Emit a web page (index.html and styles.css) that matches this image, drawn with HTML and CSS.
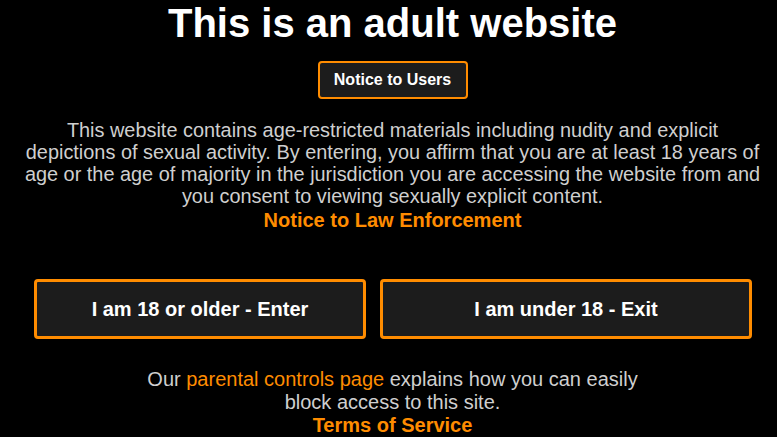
FILE: index.html
```html
<!DOCTYPE html>
<html lang="en">
<head>
<meta charset="utf-8">
<title>This is an adult website</title>
<link rel="stylesheet" href="styles.css">
</head>
<body>
<main class="gate">
  <h1 class="title">This is an adult website</h1>
  <a class="notice-btn" href="#">Notice to Users</a>
  <p class="intro">This website contains age-restricted materials including nudity and explicit depictions of sexual activity. By entering, you affirm that you are at least 18 years of age or the age of majority in the jurisdiction you are accessing the website from and you consent to viewing sexually explicit content.</p>
  <a class="law-link" href="#">Notice to Law Enforcement</a>
  <div class="choices">
    <a class="choice" href="#">I am 18 or older - Enter</a>
    <a class="choice" href="#">I am under 18 - Exit</a>
  </div>
  <p class="parental">Our <a class="inline-link" href="#">parental controls page</a> explains how you can easily block access to this site.</p>
  <a class="tos-link" href="#">Terms of Service</a>
</main>
</body>
</html>
```

FILE: styles.css
```css
html, body {
  margin: 0;
  padding: 0;
  background: #000;
}
body {
  font-family: "Liberation Sans", Arial, sans-serif;
  color: #cfcfcf;
}
.gate {
  padding-left: 8px;
  display: flex;
  flex-direction: column;
  align-items: center;
  text-align: center;
}
.title {
  margin: 0;
  font-size: 40px;
  line-height: 46px;
  font-weight: bold;
  color: #fff;
}
.notice-btn {
  margin-top: 15px;
  width: 146px;
  height: 34px;
  box-sizing: content-box;
  display: flex;
  align-items: center;
  justify-content: center;
  border: 2px solid #ff8c00;
  border-radius: 4px;
  background: #1c1c1c;
  color: #fff;
  font-size: 16px;
  font-weight: bold;
  text-decoration: none;
}
.intro {
  margin: 20px 0 0;
  width: 745px;
  font-size: 19.9px;
  line-height: 22px;
}
.law-link {
  margin-top: 2px;
  color: #ff8c00;
  font-weight: bold;
  font-size: 20px;
  line-height: 22px;
  text-decoration: none;
}
.choices {
  align-self: stretch;
  margin: 48px 25px 0 26px;
  display: grid;
  grid-template-columns: 332fr 372fr;
  gap: 14px;
}
.choice {
  height: 60px;
  box-sizing: border-box;
  display: flex;
  align-items: center;
  justify-content: center;
  border: 3px solid #ff8c00;
  border-radius: 4px;
  background: #1c1c1c;
  color: #fff;
  font-size: 20px;
  font-weight: bold;
  text-decoration: none;
}
.parental {
  margin: 29px 0 0;
  width: 520px;
  font-size: 20px;
  line-height: 23px;
}
.inline-link {
  color: #ff8c00;
  text-decoration: none;
}
.tos-link {
  color: #ff8c00;
  font-weight: bold;
  font-size: 20px;
  line-height: 22px;
  text-decoration: none;
}
```
